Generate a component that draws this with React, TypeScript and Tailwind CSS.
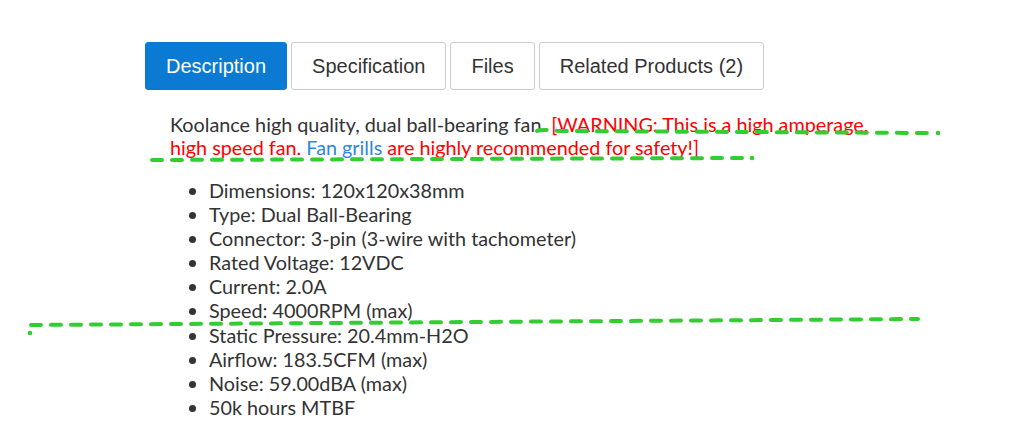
import React from "react";

const items = [
  "Dimensions: 120x120x38mm",
  "Type: Dual Ball-Bearing",
  "Connector: 3-pin (3-wire with tachometer)",
  "Rated Voltage: 12VDC",
  "Current: 2.0A",
  "Speed: 4000RPM (max)",
  "Static Pressure: 20.4mm-H2O",
  "Airflow: 183.5CFM (max)",
  "Noise: 59.00dBA (max)",
  "50k hours MTBF",
];

export default function App() {
  const tab =
    "px-5 py-3 text-[20px] leading-[22px] border rounded-[3px]";
  return (
    <div className="relative w-[1011px] h-[444px] bg-white overflow-hidden">
      <div className="pl-[145px] pt-[42px]">
        <div
          className="flex gap-[4px]"
          style={{ fontFamily: '"Liberation Sans", Arial, sans-serif' }}
        >
          <div className={`${tab} bg-[#0b7ad2] border-[#0b7ad2] text-white`}>Description</div>
          <div className={`${tab} border-[#cccccc] text-[#333333] bg-white`}>Specification</div>
          <div className={`${tab} border-[#cccccc] text-[#333333] bg-white`}>Files</div>
          <div className={`${tab} border-[#cccccc] text-[#333333] bg-white`}>Related Products (2)</div>
        </div>
        <div
          className="pl-[25px] w-[740px] text-[19.8px] text-[#333333]"
          style={{ fontFamily: 'Lato, "Open Sans", sans-serif' }}
        >
          <p className="mt-[22.5px] leading-[23px]">
            Koolance high quality, dual ball-bearing fan.{" "}
            <span className="text-[#ff0000]">
              [WARNING: This is a high amperage, high speed fan.{" "}
              <span className="text-[#3088de]">Fan grills</span> are highly
              recommended for safety!]
            </span>
          </p>
          <ul className="list-disc pl-[39px] mt-[19.5px] leading-[24.1px]">
            {items.map((t) => (
              <li key={t}>{t}</li>
            ))}
          </ul>
        </div>
      </div>
      <svg
        className="absolute inset-0 pointer-events-none"
        width="1011"
        height="444"
        viewBox="0 0 1011 444"
      >
        <g stroke="#33cc33" strokeWidth="4" strokeLinecap="round" fill="none" strokeDasharray="10 10">
          <path d="M537 131 Q540 129 560 131 L928 133" />
          <path d="M152 160 L742 158" />
          <path d="M31 325 L918 319" />
        </g>
        <g fill="#33cc33">
          <circle cx="938" cy="133" r="2.3" />
          <circle cx="752" cy="158" r="2.3" />
          <circle cx="30" cy="333" r="2.3" />
        </g>
      </svg>
    </div>
  );
}
